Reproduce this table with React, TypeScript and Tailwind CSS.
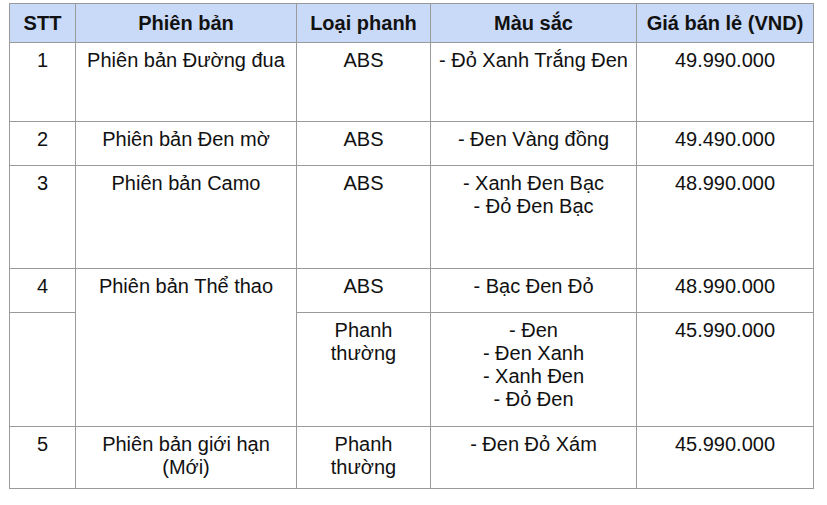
const cell = 'border border-[#9a9a9a] px-1 pt-[6px] align-top text-center';

export default function App() {
  return (
    <div className="min-h-screen bg-white pt-[3px] pl-[9px]" style={{ fontFamily: '"Liberation Sans", Arial, sans-serif' }}>
      <table className="table-fixed border-collapse text-[20px] leading-[23px] text-[#111]">
        <colgroup>
          <col className="w-[66px]" />
          <col className="w-[221px]" />
          <col className="w-[134px]" />
          <col className="w-[206px]" />
          <col className="w-[177px]" />
        </colgroup>
        <thead>
          <tr className="h-[39px] bg-[#c9daf8] font-bold">
            <th className="border border-[#9a9a9a] px-1 align-middle">STT</th>
            <th className="border border-[#9a9a9a] px-1 align-middle">Phiên bản</th>
            <th className="border border-[#9a9a9a] px-1 align-middle">Loại phanh</th>
            <th className="border border-[#9a9a9a] px-1 align-middle">Màu sắc</th>
            <th className="border border-[#9a9a9a] px-1 align-middle">Giá bán lẻ (VND)</th>
          </tr>
        </thead>
        <tbody>
          <tr className="h-[79px]">
            <td className={cell}>1</td>
            <td className={cell}>Phiên bản Đường đua</td>
            <td className={cell}>ABS</td>
            <td className={cell}>- Đỏ Xanh Trắng Đen</td>
            <td className={cell}>49.990.000</td>
          </tr>
          <tr className="h-[44px]">
            <td className={cell}>2</td>
            <td className={cell}>Phiên bản Đen mờ</td>
            <td className={cell}>ABS</td>
            <td className={cell}>- Đen Vàng đồng</td>
            <td className={cell}>49.490.000</td>
          </tr>
          <tr className="h-[103px]">
            <td className={cell}>3</td>
            <td className={cell}>Phiên bản Camo</td>
            <td className={cell}>ABS</td>
            <td className={cell}>
              - Xanh Đen Bạc
              <br />- Đỏ Đen Bạc
            </td>
            <td className={cell}>48.990.000</td>
          </tr>
          <tr className="h-[44px]">
            <td className={cell}>4</td>
            <td className={cell} rowSpan={2}>Phiên bản Thể thao</td>
            <td className={cell}>ABS</td>
            <td className={cell}>- Bạc Đen Đỏ</td>
            <td className={cell}>48.990.000</td>
          </tr>
          <tr className="h-[114px]">
            <td className={cell}></td>
            <td className={cell}>
              Phanh
              <br />
              thường
            </td>
            <td className={cell}>
              - Đen
              <br />- Đen Xanh
              <br />- Xanh Đen
              <br />- Đỏ Đen
            </td>
            <td className={cell}>45.990.000</td>
          </tr>
          <tr className="h-[62px]">
            <td className={cell}>5</td>
            <td className={cell}>
              Phiên bản giới hạn
              <br />
              (Mới)
            </td>
            <td className={cell}>
              Phanh
              <br />
              thường
            </td>
            <td className={cell}>- Đen Đỏ Xám</td>
            <td className={cell}>45.990.000</td>
          </tr>
        </tbody>
      </table>
    </div>
  );
}
